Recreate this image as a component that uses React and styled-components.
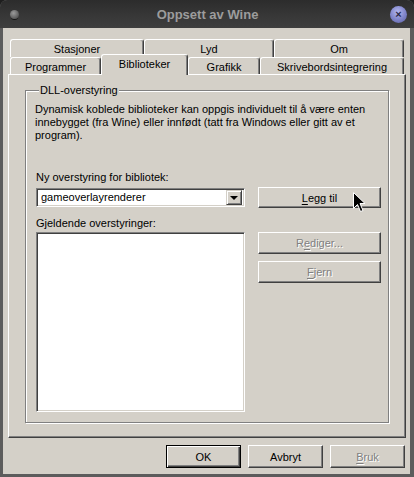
import React from 'react'
import styled, { createGlobalStyle, css } from 'styled-components'

const Global = createGlobalStyle`
  html, body {
    margin: 0;
    padding: 0;
    background: #1e1e1e;
  }
  body {
    font-family: "Liberation Sans", Arial, sans-serif;
    font-size: 11px;
  }
`

const Frame = styled.div`
  position: relative;
  width: 414px;
  height: 477px;
  box-sizing: border-box;
  display: flex;
  flex-direction: column;
  background: #5c5c5c;
  border-radius: 7px 7px 0 0;
  padding: 0 4px 3px 3px;
  overflow: hidden;
`

const TitleBar = styled.div`
  height: 28px;
  margin: 0 -4px 0 -3px;
  display: flex;
  align-items: center;
  justify-content: space-between;
  padding: 0 7px 0 10px;
  background: linear-gradient(#2c2c2c, #383838 60%, #3e3e3e);
  border-radius: 7px 7px 0 0;
`

const Title = styled.div`
  font-family: "Liberation Sans", Arial, sans-serif;
  font-weight: bold;
  font-size: 13px;
  color: #9c9c9c;
  margin-left: 6px;
`

const MenuDot = styled.div`
  width: 9px;
  height: 9px;
  border-radius: 50%;
  background: radial-gradient(circle at 40% 35%, #9a9a9a, #5a5a5a 70%);
  box-shadow: 0 2px 0 -1px #151515;
`

const CloseButton = styled.div`
  width: 17px;
  height: 17px;
  border-radius: 50%;
  background: radial-gradient(circle at 45% 35%, #b4b8f0, #7d82c8 55%, #5b5f9e);
  display: flex;
  align-items: center;
  justify-content: center;
  color: #2a2a48;
  font-size: 11px;
  font-weight: bold;
  line-height: 1;
`

const Client = styled.div`
  flex: 1;
  display: flex;
  flex-direction: column;
  background: #d4d0c8;
  padding: 11px 4px 6px 5px;
  color: #000;
`

const TabStrip = styled.div`
  display: flex;
  flex-direction: column;
  margin-left: 2px;
  z-index: 1;
`

const TabRow = styled.div`
  display: flex;
  height: ${p => p.$h}px;
`

const Tab = styled.div`
  box-sizing: border-box;
  width: ${p => p.$w}px;
  height: 100%;
  display: flex;
  align-items: center;
  justify-content: center;
  background: #d4d0c8;
  border-top: 1px solid #fff;
  border-left: 1px solid #fff;
  border-right: 1px solid #404040;
  box-shadow: inset -1px 0 0 #808080;
  border-radius: 3px 3px 0 0;
  padding-top: 1px;
  ${p => p.$active && css`
    margin-top: -3px;
    height: calc(100% + 4px);
    align-items: flex-start;
    padding-top: 3px;
  `}
`

const Panel = styled.div`
  flex: 1;
  display: flex;
  flex-direction: column;
  background: #d4d0c8;
  border-top: 1px solid #fff;
  border-left: 1px solid #fff;
  border-right: 1px solid #404040;
  border-bottom: 1px solid #404040;
  box-shadow: inset -1px -1px 0 #808080;
  padding: 9px 15px 13px 16px;
`

const Group = styled.fieldset`
  flex: 1;
  margin: 0 1px 1px 0;
  padding: 6px 10px 0 9px;
  border: 1px solid #808080;
  box-shadow: inset 1px 1px 0 #fff, 1px 1px 0 #fff;
  display: flex;
  flex-direction: column;
  min-width: 0;
`

const Legend = styled.legend`
  padding: 0 1px;
  margin-left: 4px;
  line-height: 13px;
  background: #d4d0c8;
`

const Desc = styled.p`
  margin: 0 0 29px 0;
  line-height: 13px;
  white-space: nowrap;
`

const Grid = styled.div`
  flex: 1;
  display: grid;
  grid-template-columns: 209px 123px;
  grid-template-rows: auto 19px auto 1fr;
  column-gap: 13px;
  padding-left: 1px;
  padding-bottom: 10px;
`

const Label = styled.div`
  grid-column: 1;
  line-height: 13px;
  margin-bottom: ${p => p.$mb || 0}px;
  margin-top: ${p => p.$mt || 0}px;
`

const sunken = css`
  box-sizing: border-box;
  background: #fff;
  border-top: 1px solid #808080;
  border-left: 1px solid #808080;
  border-right: 1px solid #fff;
  border-bottom: 1px solid #fff;
  box-shadow: inset 1px 1px 0 #404040, inset -1px -1px 0 #d4d0c8;
`

const Combo = styled.div`
  ${sunken}
  grid-column: 1;
  grid-row: 2;
  display: flex;
  align-items: center;
  padding: 2px 2px 2px 4px;
`

const ComboText = styled.span`
  flex: 1;
  line-height: 13px;
`

const DropButton = styled.div`
  width: 16px;
  height: 15px;
  box-sizing: border-box;
  background: #d4d0c8;
  border-top: 1px solid #d4d0c8;
  border-left: 1px solid #d4d0c8;
  border-right: 1px solid #404040;
  border-bottom: 1px solid #404040;
  box-shadow: inset 1px 1px 0 #fff, inset -1px -1px 0 #808080;
  display: flex;
  align-items: center;
  justify-content: center;
`

const Arrow = styled.div`
  width: 0;
  height: 0;
  border-left: 4px solid transparent;
  border-right: 4px solid transparent;
  border-top: 4px solid #000;
  margin-top: 1px;
`

const ListBox = styled.div`
  ${sunken}
  grid-column: 1;
  grid-row: 4;
  margin-top: 2px;
`

const Button = styled.div`
  box-sizing: border-box;
  width: ${p => p.$w || 123}px;
  height: ${p => p.$h || 22}px;
  display: flex;
  align-items: center;
  justify-content: center;
  background: #d4d0c8;
  border-top: 1px solid #fff;
  border-left: 1px solid #fff;
  border-right: 1px solid #404040;
  border-bottom: 1px solid #404040;
  box-shadow: inset -1px -1px 0 #808080;
  color: ${p => (p.$disabled ? '#808080' : '#000')};
  text-shadow: ${p => (p.$disabled ? '1px 1px 0 #fff' : 'none')};
  ${p => p.$default && css`
    border: 1px solid #000;
    box-shadow: inset 1px 1px 0 #fff, inset -1px -1px 0 #404040, inset -2px -2px 0 #808080;
  `}
`

const AddButton = styled(Button)`
  grid-column: 2;
  grid-row: 2;
  align-self: center;
  margin: -1px 0;
`

const SideButtons = styled.div`
  grid-column: 2;
  grid-row: 4;
  margin-top: 2px;
  display: flex;
  flex-direction: column;
  gap: 7px;
`

const Mn = styled.span`
  text-decoration: underline;
  text-underline-offset: 2px;
`

const Footer = styled.div`
  display: flex;
  justify-content: flex-end;
  gap: 7px;
  margin-top: 7px;
  margin-right: 1px;
`

const Cursor = styled.svg`
  position: absolute;
  left: 353px;
  top: 192px;
`

export default function App() {
  return (
    <>
      <Global />
      <Frame>
        <TitleBar>
          <MenuDot />
          <Title>Oppsett av Wine</Title>
          <CloseButton>×</CloseButton>
        </TitleBar>
        <Client>
          <TabStrip>
            <TabRow $h={18}>
              <Tab $w={134}>Stasjoner</Tab>
              <Tab $w={130}>Lyd</Tab>
              <Tab $w={130}>Om</Tab>
            </TabRow>
            <TabRow $h={17}>
              <Tab $w={91}>Programmer</Tab>
              <Tab $w={87} $active>Biblioteker</Tab>
              <Tab $w={72}>Grafikk</Tab>
              <Tab $w={144}>Skrivebordsintegrering</Tab>
            </TabRow>
          </TabStrip>
          <Panel>
            <Group>
              <Legend>DLL-overstyring</Legend>
              <Desc>
                Dynamisk koblede biblioteker kan oppgis individuelt til å være enten<br />
                innebygget (fra Wine) eller innfødt (tatt fra Windows eller gitt av et<br />
                program).
              </Desc>
              <Grid>
                <Label $mb={4}>Ny overstyring for bibliotek:</Label>
                <Combo>
                  <ComboText>gameoverlayrenderer</ComboText>
                  <DropButton><Arrow /></DropButton>
                </Combo>
                <AddButton $h={21}><span><Mn>L</Mn>egg til</span></AddButton>
                <Label $mt={10}>Gjeldende overstyringer:</Label>
                <ListBox />
                <SideButtons>
                  <Button $disabled><span>R<Mn>e</Mn>diger...</span></Button>
                  <Button $disabled><span><Mn>F</Mn>jern</span></Button>
                </SideButtons>
              </Grid>
            </Group>
          </Panel>
          <Footer>
            <Button $w={75} $h={23} $default>OK</Button>
            <Button $w={75} $h={23}>Avbryt</Button>
            <Button $w={75} $h={23} $disabled><span><Mn>B</Mn>ruk</span></Button>
          </Footer>
        </Client>
        <Cursor width="13" height="21" viewBox="0 0 13 21">
          <path d="M0.5 0.5 L0.5 16.5 L4.5 12.5 L7.5 19.5 L10 18.5 L7 11.5 L12 11.5 Z" fill="#000" stroke="#fff" strokeWidth="1" />
        </Cursor>
      </Frame>
    </>
  )
}
